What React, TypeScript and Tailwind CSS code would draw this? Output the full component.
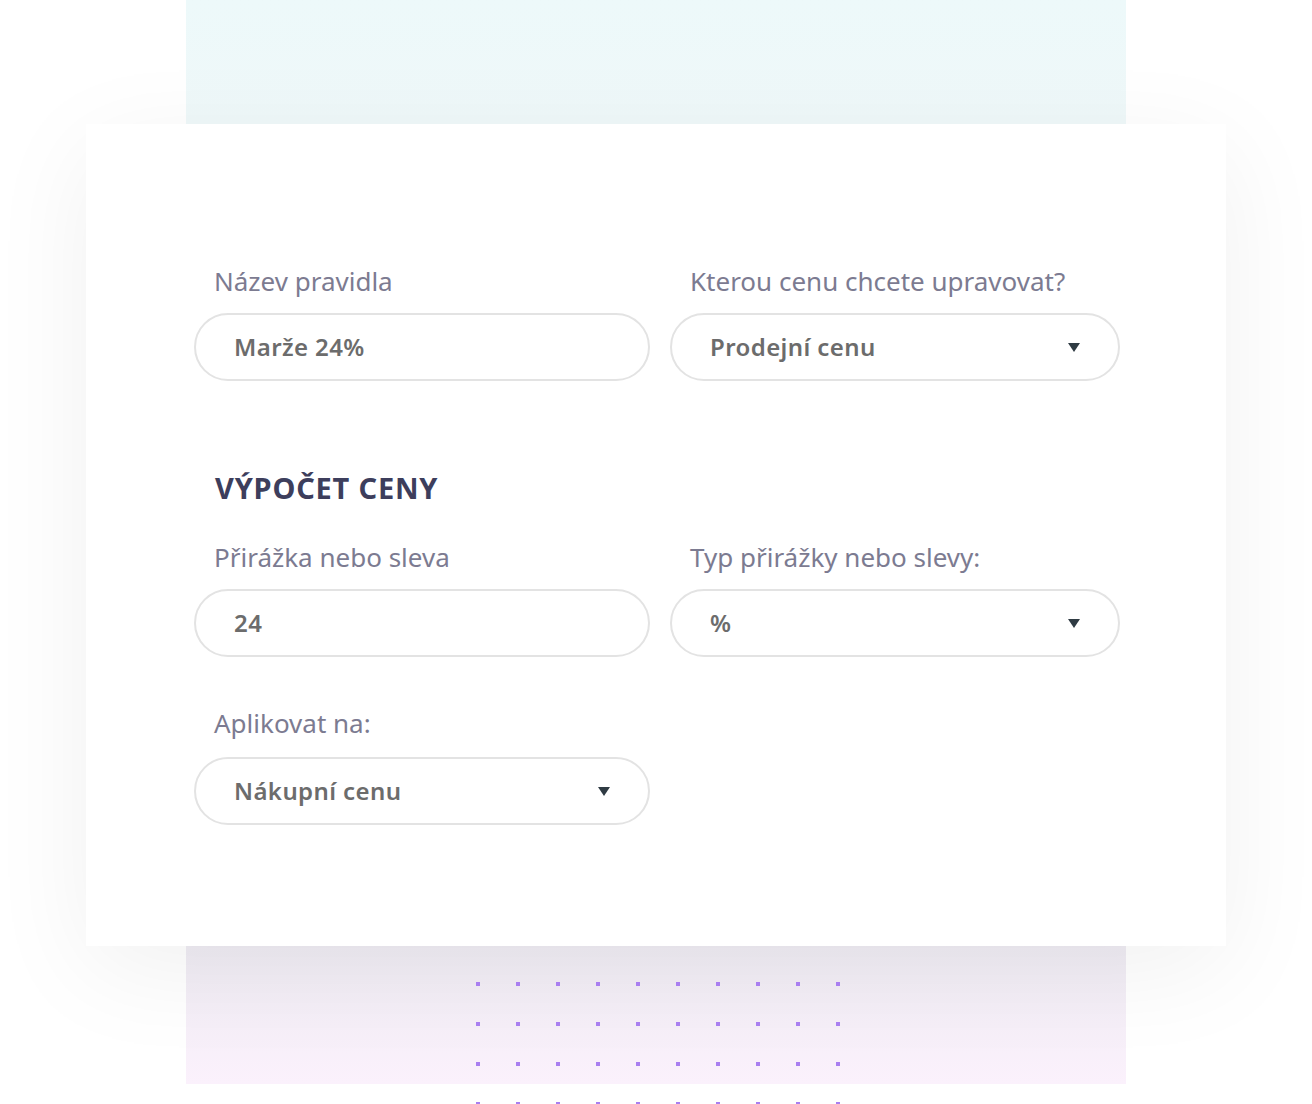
import React from "react";

function Label({ children, mb = "mb-[16px]" }: { children: React.ReactNode; mb?: string }) {
  return (
    <div className={"text-[26px] leading-[32px] text-[#7c7b91] pl-[20px] " + mb}>
      {children}
    </div>
  );
}

function Arrow() {
  return (
    <svg width="12" height="9" viewBox="0 0 12 9" className="shrink-0">
      <polygon points="0,0 12,0 6,9" fill="#2f3b43" />
    </svg>
  );
}

function Field({ value, select }: { value: string; select?: boolean }) {
  return (
    <div className="h-[68px] rounded-full border-2 border-[#e3e3e3] bg-white flex items-center justify-between pl-[38px] pr-[38px]">
      <span className="text-[24px] leading-[32px] font-semibold tracking-[0.4px] text-[#6c6c6c]">{value}</span>
      {select && <Arrow />}
    </div>
  );
}

export default function App() {
  const cols = [0, 1, 2, 3, 4, 5, 6, 7, 8, 9];
  const rows = [0, 1, 2, 3];
  return (
    <div className="w-[1312px] h-[1104px] overflow-hidden bg-white font-['Noto_Sans',sans-serif]">
      <div className="ml-[186px] w-[940px] h-[124px] bg-gradient-to-b from-[#edf9fa] to-[#eff8f9]" />
      <div className="relative z-10 ml-[86px] w-[1140px] h-[822px] bg-white shadow-[0_24px_100px_rgba(0,0,0,0.06)] pl-[108px] pr-[106px] pt-[141px]">
        <div className="grid grid-cols-[456px_450px] gap-x-[20px]">
          <div>
            <Label>Název pravidla</Label>
            <Field value="Marže 24%" />
          </div>
          <div>
            <Label>Kterou cenu chcete upravovat?</Label>
            <Field value="Prodejní cenu" select />
          </div>
        </div>
        <h2 className="mt-[89px] pl-[21px] text-[29px] leading-[36px] font-bold tracking-[0.8px] text-[#3d3e5c]">
          VÝPOČET CENY
        </h2>
        <div className="mt-[35px] grid grid-cols-[456px_450px] gap-x-[20px]">
          <div>
            <Label>Přirážka nebo sleva</Label>
            <Field value="24" />
          </div>
          <div>
            <Label>Typ přirážky nebo slevy:</Label>
            <Field value="%" select />
          </div>
        </div>
        <div className="mt-[50px] w-[456px]">
          <Label mb="mb-[18px]">Aplikovat na:</Label>
          <Field value="Nákupní cenu" select />
        </div>
      </div>
      <div className="relative ml-[186px] w-[940px] h-[138px] bg-gradient-to-b from-[#efecf3] to-[#fbf1fc]">
        <div className="absolute z-20 left-[290px] top-[36px] flex flex-col gap-[36px]">
          {rows.map((r) => (
            <div key={r} className="flex gap-[36px]">
              {cols.map((c) => (
                <div key={c} className="w-[4px] h-[4px] bg-[#a97ff0]" />
              ))}
            </div>
          ))}
        </div>
      </div>
    </div>
  );
}
